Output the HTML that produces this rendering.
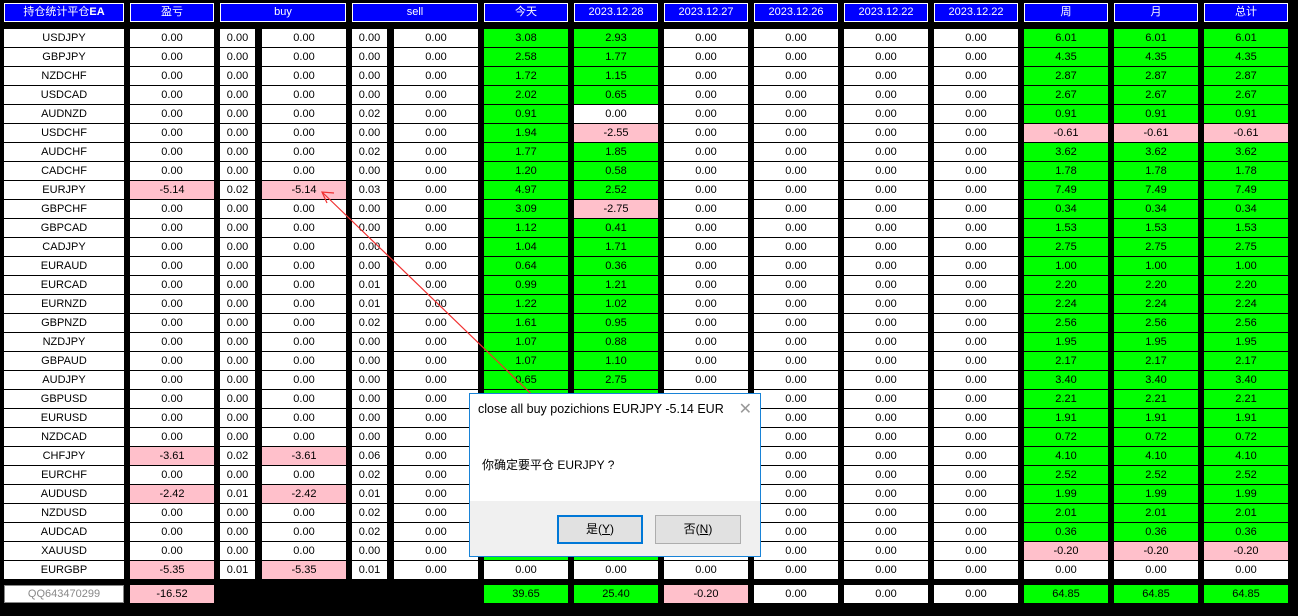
<!DOCTYPE html>
<html><head><meta charset="utf-8"><style>
body{margin:0;width:1298px;height:616px;background:#000;position:relative;overflow:hidden;font-family:"Liberation Sans","Noto Sans CJK SC",sans-serif;font-size:11px;color:#000}
.w{position:absolute;left:0;top:1px;width:1298px;height:615px}
.r{position:absolute;left:0;height:18px;width:1298px}
.r span{position:absolute;top:0;height:18px;line-height:18px;background:#fff;text-align:center}
.h span{background:#0000ff;color:#fff;height:19px;line-height:19px;box-shadow:inset 0 0 0 1px #fff;font-size:11px}
.a{left:4px;width:120px}.b{left:130px;width:84px}.c{left:220px;width:35px}.d{left:262px;width:84px}.e{left:352px;width:35px}.f{left:394px;width:84px}
.g{left:484px;width:84px}.i{left:574px;width:84px}.j{left:664px;width:84px}.k{left:754px;width:84px}.l{left:844px;width:84px}.m{left:934px;width:84px}.n{left:1024px;width:84px}.o{left:1114px;width:84px}.p{left:1204px;width:84px}
.bu{left:220px;width:126px}.se{left:352px;width:126px}
.r span.G{background:#00ff00}.r span.P{background:#ffc0cb}
</style></head><body>
<div class="r h" style="top:3px"><span class="a">持仓统计平仓<b>EA</b></span><span class="b">盈亏</span><span class="bu">buy</span><span class="se">sell</span><span class="g">今天</span><span class="i">2023.12.28</span><span class="j">2023.12.27</span><span class="k">2023.12.26</span><span class="l">2023.12.22</span><span class="m">2023.12.22</span><span class="n">周</span><span class="o">月</span><span class="p">总计</span></div>
<div class="w">
<div class="r" style="top:28px"><span class="a">USDJPY</span><span class="b">0.00</span><span class="c">0.00</span><span class="d">0.00</span><span class="e">0.00</span><span class="f">0.00</span><span class="g G">3.08</span><span class="i G">2.93</span><span class="j">0.00</span><span class="k">0.00</span><span class="l">0.00</span><span class="m">0.00</span><span class="n G">6.01</span><span class="o G">6.01</span><span class="p G">6.01</span></div>
<div class="r" style="top:47px"><span class="a">GBPJPY</span><span class="b">0.00</span><span class="c">0.00</span><span class="d">0.00</span><span class="e">0.00</span><span class="f">0.00</span><span class="g G">2.58</span><span class="i G">1.77</span><span class="j">0.00</span><span class="k">0.00</span><span class="l">0.00</span><span class="m">0.00</span><span class="n G">4.35</span><span class="o G">4.35</span><span class="p G">4.35</span></div>
<div class="r" style="top:66px"><span class="a">NZDCHF</span><span class="b">0.00</span><span class="c">0.00</span><span class="d">0.00</span><span class="e">0.00</span><span class="f">0.00</span><span class="g G">1.72</span><span class="i G">1.15</span><span class="j">0.00</span><span class="k">0.00</span><span class="l">0.00</span><span class="m">0.00</span><span class="n G">2.87</span><span class="o G">2.87</span><span class="p G">2.87</span></div>
<div class="r" style="top:85px"><span class="a">USDCAD</span><span class="b">0.00</span><span class="c">0.00</span><span class="d">0.00</span><span class="e">0.00</span><span class="f">0.00</span><span class="g G">2.02</span><span class="i G">0.65</span><span class="j">0.00</span><span class="k">0.00</span><span class="l">0.00</span><span class="m">0.00</span><span class="n G">2.67</span><span class="o G">2.67</span><span class="p G">2.67</span></div>
<div class="r" style="top:104px"><span class="a">AUDNZD</span><span class="b">0.00</span><span class="c">0.00</span><span class="d">0.00</span><span class="e">0.02</span><span class="f">0.00</span><span class="g G">0.91</span><span class="i">0.00</span><span class="j">0.00</span><span class="k">0.00</span><span class="l">0.00</span><span class="m">0.00</span><span class="n G">0.91</span><span class="o G">0.91</span><span class="p G">0.91</span></div>
<div class="r" style="top:123px"><span class="a">USDCHF</span><span class="b">0.00</span><span class="c">0.00</span><span class="d">0.00</span><span class="e">0.00</span><span class="f">0.00</span><span class="g G">1.94</span><span class="i P">-2.55</span><span class="j">0.00</span><span class="k">0.00</span><span class="l">0.00</span><span class="m">0.00</span><span class="n P">-0.61</span><span class="o P">-0.61</span><span class="p P">-0.61</span></div>
<div class="r" style="top:142px"><span class="a">AUDCHF</span><span class="b">0.00</span><span class="c">0.00</span><span class="d">0.00</span><span class="e">0.02</span><span class="f">0.00</span><span class="g G">1.77</span><span class="i G">1.85</span><span class="j">0.00</span><span class="k">0.00</span><span class="l">0.00</span><span class="m">0.00</span><span class="n G">3.62</span><span class="o G">3.62</span><span class="p G">3.62</span></div>
<div class="r" style="top:161px"><span class="a">CADCHF</span><span class="b">0.00</span><span class="c">0.00</span><span class="d">0.00</span><span class="e">0.00</span><span class="f">0.00</span><span class="g G">1.20</span><span class="i G">0.58</span><span class="j">0.00</span><span class="k">0.00</span><span class="l">0.00</span><span class="m">0.00</span><span class="n G">1.78</span><span class="o G">1.78</span><span class="p G">1.78</span></div>
<div class="r" style="top:180px"><span class="a">EURJPY</span><span class="b P">-5.14</span><span class="c">0.02</span><span class="d P">-5.14</span><span class="e">0.03</span><span class="f">0.00</span><span class="g G">4.97</span><span class="i G">2.52</span><span class="j">0.00</span><span class="k">0.00</span><span class="l">0.00</span><span class="m">0.00</span><span class="n G">7.49</span><span class="o G">7.49</span><span class="p G">7.49</span></div>
<div class="r" style="top:199px"><span class="a">GBPCHF</span><span class="b">0.00</span><span class="c">0.00</span><span class="d">0.00</span><span class="e">0.00</span><span class="f">0.00</span><span class="g G">3.09</span><span class="i P">-2.75</span><span class="j">0.00</span><span class="k">0.00</span><span class="l">0.00</span><span class="m">0.00</span><span class="n G">0.34</span><span class="o G">0.34</span><span class="p G">0.34</span></div>
<div class="r" style="top:218px"><span class="a">GBPCAD</span><span class="b">0.00</span><span class="c">0.00</span><span class="d">0.00</span><span class="e">0.00</span><span class="f">0.00</span><span class="g G">1.12</span><span class="i G">0.41</span><span class="j">0.00</span><span class="k">0.00</span><span class="l">0.00</span><span class="m">0.00</span><span class="n G">1.53</span><span class="o G">1.53</span><span class="p G">1.53</span></div>
<div class="r" style="top:237px"><span class="a">CADJPY</span><span class="b">0.00</span><span class="c">0.00</span><span class="d">0.00</span><span class="e">0.00</span><span class="f">0.00</span><span class="g G">1.04</span><span class="i G">1.71</span><span class="j">0.00</span><span class="k">0.00</span><span class="l">0.00</span><span class="m">0.00</span><span class="n G">2.75</span><span class="o G">2.75</span><span class="p G">2.75</span></div>
<div class="r" style="top:256px"><span class="a">EURAUD</span><span class="b">0.00</span><span class="c">0.00</span><span class="d">0.00</span><span class="e">0.00</span><span class="f">0.00</span><span class="g G">0.64</span><span class="i G">0.36</span><span class="j">0.00</span><span class="k">0.00</span><span class="l">0.00</span><span class="m">0.00</span><span class="n G">1.00</span><span class="o G">1.00</span><span class="p G">1.00</span></div>
<div class="r" style="top:275px"><span class="a">EURCAD</span><span class="b">0.00</span><span class="c">0.00</span><span class="d">0.00</span><span class="e">0.01</span><span class="f">0.00</span><span class="g G">0.99</span><span class="i G">1.21</span><span class="j">0.00</span><span class="k">0.00</span><span class="l">0.00</span><span class="m">0.00</span><span class="n G">2.20</span><span class="o G">2.20</span><span class="p G">2.20</span></div>
<div class="r" style="top:294px"><span class="a">EURNZD</span><span class="b">0.00</span><span class="c">0.00</span><span class="d">0.00</span><span class="e">0.01</span><span class="f">0.00</span><span class="g G">1.22</span><span class="i G">1.02</span><span class="j">0.00</span><span class="k">0.00</span><span class="l">0.00</span><span class="m">0.00</span><span class="n G">2.24</span><span class="o G">2.24</span><span class="p G">2.24</span></div>
<div class="r" style="top:313px"><span class="a">GBPNZD</span><span class="b">0.00</span><span class="c">0.00</span><span class="d">0.00</span><span class="e">0.02</span><span class="f">0.00</span><span class="g G">1.61</span><span class="i G">0.95</span><span class="j">0.00</span><span class="k">0.00</span><span class="l">0.00</span><span class="m">0.00</span><span class="n G">2.56</span><span class="o G">2.56</span><span class="p G">2.56</span></div>
<div class="r" style="top:332px"><span class="a">NZDJPY</span><span class="b">0.00</span><span class="c">0.00</span><span class="d">0.00</span><span class="e">0.00</span><span class="f">0.00</span><span class="g G">1.07</span><span class="i G">0.88</span><span class="j">0.00</span><span class="k">0.00</span><span class="l">0.00</span><span class="m">0.00</span><span class="n G">1.95</span><span class="o G">1.95</span><span class="p G">1.95</span></div>
<div class="r" style="top:351px"><span class="a">GBPAUD</span><span class="b">0.00</span><span class="c">0.00</span><span class="d">0.00</span><span class="e">0.00</span><span class="f">0.00</span><span class="g G">1.07</span><span class="i G">1.10</span><span class="j">0.00</span><span class="k">0.00</span><span class="l">0.00</span><span class="m">0.00</span><span class="n G">2.17</span><span class="o G">2.17</span><span class="p G">2.17</span></div>
<div class="r" style="top:370px"><span class="a">AUDJPY</span><span class="b">0.00</span><span class="c">0.00</span><span class="d">0.00</span><span class="e">0.00</span><span class="f">0.00</span><span class="g G">0.65</span><span class="i G">2.75</span><span class="j">0.00</span><span class="k">0.00</span><span class="l">0.00</span><span class="m">0.00</span><span class="n G">3.40</span><span class="o G">3.40</span><span class="p G">3.40</span></div>
<div class="r" style="top:389px"><span class="a">GBPUSD</span><span class="b">0.00</span><span class="c">0.00</span><span class="d">0.00</span><span class="e">0.00</span><span class="f">0.00</span><span class="g G">0.00</span><span class="i G">0.00</span><span class="j">0.00</span><span class="k">0.00</span><span class="l">0.00</span><span class="m">0.00</span><span class="n G">2.21</span><span class="o G">2.21</span><span class="p G">2.21</span></div>
<div class="r" style="top:408px"><span class="a">EURUSD</span><span class="b">0.00</span><span class="c">0.00</span><span class="d">0.00</span><span class="e">0.00</span><span class="f">0.00</span><span class="g G">0.00</span><span class="i G">0.00</span><span class="j">0.00</span><span class="k">0.00</span><span class="l">0.00</span><span class="m">0.00</span><span class="n G">1.91</span><span class="o G">1.91</span><span class="p G">1.91</span></div>
<div class="r" style="top:427px"><span class="a">NZDCAD</span><span class="b">0.00</span><span class="c">0.00</span><span class="d">0.00</span><span class="e">0.00</span><span class="f">0.00</span><span class="g G">0.00</span><span class="i G">0.00</span><span class="j">0.00</span><span class="k">0.00</span><span class="l">0.00</span><span class="m">0.00</span><span class="n G">0.72</span><span class="o G">0.72</span><span class="p G">0.72</span></div>
<div class="r" style="top:446px"><span class="a">CHFJPY</span><span class="b P">-3.61</span><span class="c">0.02</span><span class="d P">-3.61</span><span class="e">0.06</span><span class="f">0.00</span><span class="g G">0.00</span><span class="i G">0.00</span><span class="j">0.00</span><span class="k">0.00</span><span class="l">0.00</span><span class="m">0.00</span><span class="n G">4.10</span><span class="o G">4.10</span><span class="p G">4.10</span></div>
<div class="r" style="top:465px"><span class="a">EURCHF</span><span class="b">0.00</span><span class="c">0.00</span><span class="d">0.00</span><span class="e">0.02</span><span class="f">0.00</span><span class="g G">0.00</span><span class="i G">0.00</span><span class="j">0.00</span><span class="k">0.00</span><span class="l">0.00</span><span class="m">0.00</span><span class="n G">2.52</span><span class="o G">2.52</span><span class="p G">2.52</span></div>
<div class="r" style="top:484px"><span class="a">AUDUSD</span><span class="b P">-2.42</span><span class="c">0.01</span><span class="d P">-2.42</span><span class="e">0.01</span><span class="f">0.00</span><span class="g G">0.00</span><span class="i G">0.00</span><span class="j">0.00</span><span class="k">0.00</span><span class="l">0.00</span><span class="m">0.00</span><span class="n G">1.99</span><span class="o G">1.99</span><span class="p G">1.99</span></div>
<div class="r" style="top:503px"><span class="a">NZDUSD</span><span class="b">0.00</span><span class="c">0.00</span><span class="d">0.00</span><span class="e">0.02</span><span class="f">0.00</span><span class="g G">0.00</span><span class="i G">0.00</span><span class="j">0.00</span><span class="k">0.00</span><span class="l">0.00</span><span class="m">0.00</span><span class="n G">2.01</span><span class="o G">2.01</span><span class="p G">2.01</span></div>
<div class="r" style="top:522px"><span class="a">AUDCAD</span><span class="b">0.00</span><span class="c">0.00</span><span class="d">0.00</span><span class="e">0.02</span><span class="f">0.00</span><span class="g G">0.00</span><span class="i G">0.00</span><span class="j">0.00</span><span class="k">0.00</span><span class="l">0.00</span><span class="m">0.00</span><span class="n G">0.36</span><span class="o G">0.36</span><span class="p G">0.36</span></div>
<div class="r" style="top:541px"><span class="a">XAUUSD</span><span class="b">0.00</span><span class="c">0.00</span><span class="d">0.00</span><span class="e">0.00</span><span class="f">0.00</span><span class="g G">0.00</span><span class="i G">0.00</span><span class="j">0.00</span><span class="k">0.00</span><span class="l">0.00</span><span class="m">0.00</span><span class="n P">-0.20</span><span class="o P">-0.20</span><span class="p P">-0.20</span></div>
<div class="r" style="top:560px"><span class="a">EURGBP</span><span class="b P">-5.35</span><span class="c">0.01</span><span class="d P">-5.35</span><span class="e">0.01</span><span class="f">0.00</span><span class="g">0.00</span><span class="i">0.00</span><span class="j">0.00</span><span class="k">0.00</span><span class="l">0.00</span><span class="m">0.00</span><span class="n">0.00</span><span class="o">0.00</span><span class="p">0.00</span></div>
<div class="r" style="top:584px"><span class="a" style="color:#888;box-shadow:inset 0 0 0 1px #888">QQ643470299</span><span class="b P">-16.52</span><span class="g G">39.65</span><span class="i G">25.40</span><span class="j P">-0.20</span><span class="k">0.00</span><span class="l">0.00</span><span class="m">0.00</span><span class="n G">64.85</span><span class="o G">64.85</span><span class="p G">64.85</span></div>
</div>
<svg style="position:absolute;left:0;top:0" width="1298" height="616"><line x1="636" y1="495" x2="322" y2="192" stroke="#f03030" stroke-width="1.2"/><polyline points="334,193 322,192 327,203" fill="none" stroke="#f03030" stroke-width="1.2"/></svg>

<div style="position:absolute;left:469px;top:393px;width:290px;height:162px;background:#fff;border:1px solid #1883d7;font-size:12.5px">
<div style="position:absolute;left:8px;top:8px">close all buy pozichions EURJPY -5.14 EUR</div>
<div style="position:absolute;right:8px;top:5px;color:#999;font-size:16px">✕</div>
<div style="position:absolute;left:12px;top:62px;font-size:12px">你确定要平仓 EURJPY ?</div>
<div style="position:absolute;left:0;top:107px;width:290px;height:55px;background:#f0f0f0"></div>
<div style="position:absolute;left:87px;top:121px;width:82px;height:25px;background:#e1e1e1;border:2px solid #0078d7;text-align:center;line-height:25px;font-size:12px">是(<u>Y</u>)</div>
<div style="position:absolute;left:185px;top:121px;width:84px;height:27px;background:#e1e1e1;border:1px solid #adadad;text-align:center;line-height:27px;font-size:12px">否(<u>N</u>)</div>
</div>
</body></html>
